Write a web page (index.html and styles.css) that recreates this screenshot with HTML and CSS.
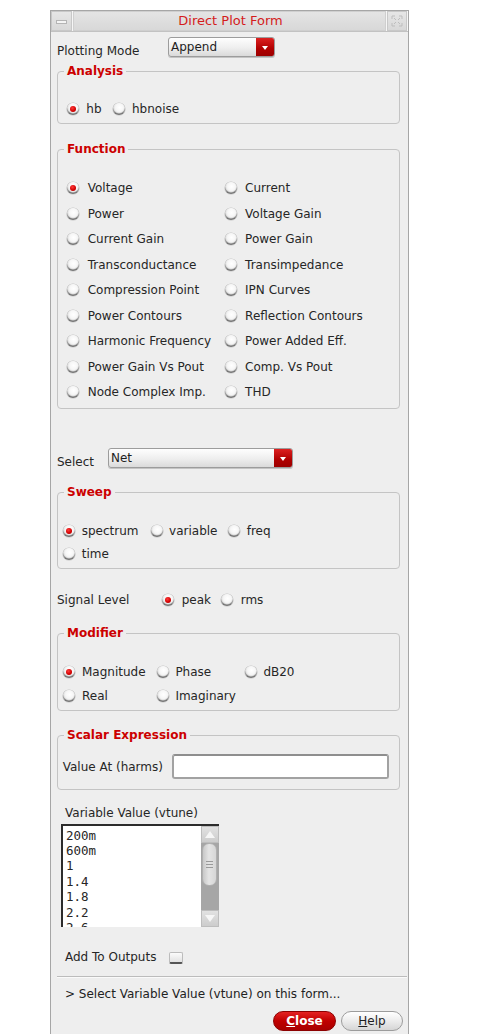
FILE: index.html
```html
<!DOCTYPE html>
<html lang="en">
<head>
<meta charset="utf-8">
<title>Direct Plot Form</title>
<link rel="stylesheet" href="styles.css">
</head>
<body>
<div class="window">
  <div class="titlebar">
    <div class="tb-btn tb-min"><span class="dash"></span></div>
    <div class="tb-title">Direct Plot Form</div>
    <div class="tb-btn tb-max">
      <svg width="12" height="12" viewBox="0 0 12 12" fill="none" stroke="#bdbdbd" stroke-width="1">
        <path d="M1 4V1h3M8 1h3v3M11 8v3H8M4 11H1V8"/>
        <path d="M3 3l2 2M9 3L7 5M9 9L7 7M3 9l2-2"/>
      </svg>
    </div>
  </div>

  <div class="content">
    <div class="field-row mode-row">
      <span class="lbl lbl-mode">Plotting Mode</span>
      <div class="combo combo-mode"><span class="val">Append</span><span class="arrow"></span></div>
    </div>

    <fieldset class="group g-analysis">
      <legend>Analysis</legend>
      <div class="opts opts-analysis">
        <div class="opt"><span class="rb on"></span>hb</div>
        <div class="opt"><span class="rb"></span>hbnoise</div>
      </div>
    </fieldset>

    <fieldset class="group g-function">
      <legend>Function</legend>
      <div class="opts opts-function">
        <div class="opt"><span class="rb on"></span>Voltage</div>
        <div class="opt"><span class="rb"></span>Current</div>
        <div class="opt"><span class="rb"></span>Power</div>
        <div class="opt"><span class="rb"></span>Voltage Gain</div>
        <div class="opt"><span class="rb"></span>Current Gain</div>
        <div class="opt"><span class="rb"></span>Power Gain</div>
        <div class="opt"><span class="rb"></span>Transconductance</div>
        <div class="opt"><span class="rb"></span>Transimpedance</div>
        <div class="opt"><span class="rb"></span>Compression Point</div>
        <div class="opt"><span class="rb"></span>IPN Curves</div>
        <div class="opt"><span class="rb"></span>Power Contours</div>
        <div class="opt"><span class="rb"></span>Reflection Contours</div>
        <div class="opt"><span class="rb"></span>Harmonic Frequency</div>
        <div class="opt"><span class="rb"></span>Power Added Eff.</div>
        <div class="opt"><span class="rb"></span>Power Gain Vs Pout</div>
        <div class="opt"><span class="rb"></span>Comp. Vs Pout</div>
        <div class="opt"><span class="rb"></span>Node Complex Imp.</div>
        <div class="opt"><span class="rb"></span>THD</div>
      </div>
    </fieldset>

    <div class="field-row select-row">
      <span class="lbl lbl-select">Select</span>
      <div class="combo combo-select"><span class="val">Net</span><span class="arrow"></span></div>
    </div>

    <fieldset class="group g-sweep">
      <legend>Sweep</legend>
      <div class="opts opts-sweep">
        <div class="opt"><span class="rb on"></span>spectrum</div>
        <div class="opt"><span class="rb"></span>variable</div>
        <div class="opt"><span class="rb"></span>freq</div>
        <div class="opt"><span class="rb"></span>time</div>
      </div>
    </fieldset>

    <div class="signal-row">
      <span class="lbl lbl-signal">Signal Level</span>
      <div class="opt opt-peak"><span class="rb on"></span>peak</div>
      <div class="opt"><span class="rb"></span>rms</div>
    </div>

    <fieldset class="group g-modifier">
      <legend>Modifier</legend>
      <div class="opts opts-modifier">
        <div class="opt"><span class="rb on"></span>Magnitude</div>
        <div class="opt"><span class="rb"></span>Phase</div>
        <div class="opt"><span class="rb"></span>dB20</div>
        <div class="opt"><span class="rb"></span>Real</div>
        <div class="opt"><span class="rb"></span>Imaginary</div>
      </div>
    </fieldset>

    <fieldset class="group g-scalar">
      <legend>Scalar Expression</legend>
      <div class="scalar-row">
        <span class="lbl lbl-value">Value At (harms)</span>
        <div class="text-input"></div>
      </div>
    </fieldset>

    <div class="lbl lbl-var">Variable Value (vtune)</div>
    <div class="listbox">
      <div class="list">
        <div>200m</div>
        <div>600m</div>
        <div>1</div>
        <div>1.4</div>
        <div>1.8</div>
        <div>2.2</div>
        <div>2.6</div>
      </div>
      <div class="sb">
        <div class="sb-btn sb-up"><span class="tri-up"></span></div>
        <div class="sb-track">
          <div class="sb-thumb"><span class="grip"></span></div>
        </div>
        <div class="sb-btn sb-down"><span class="tri-down"></span></div>
      </div>
    </div>

    <div class="add-row">
      <span class="lbl lbl-add">Add To Outputs</span>
      <span class="checkbox"></span>
    </div>

    <div class="separator"></div>

    <div class="status">&gt; Select Variable Value (vtune) on this form...</div>

    <div class="buttons">
      <div class="btn btn-close"><span class="u">C</span>lose</div>
      <div class="btn btn-help"><span class="u">H</span>elp</div>
    </div>
  </div>
</div>
</body>
</html>
```

FILE: styles.css
```css
* { box-sizing: border-box; }

html, body {
  margin: 0;
  padding: 0;
  background: #ffffff;
  height: 1034px;
  overflow: hidden;
}

body {
  font-family: "DejaVu Sans", "Noto Sans", sans-serif;
  font-size: 12px;
  line-height: 14px;
  color: #262626;
}

.window {
  margin: 10px 0 0 50px;
  width: 359px;
  height: 1040px;
  border: 1px solid #a6a6a6;
  border-bottom: none;
  background: #eeeeee;
  display: flex;
  flex-direction: column;
}

/* ---------- title bar ---------- */
.titlebar {
  display: flex;
  height: 21px;
  gap: 1px;
  background: #f6f6f6;
  border-bottom: 1px solid #c2c2c2;
  padding-right: 1px;
}

.tb-btn {
  width: 21px;
  flex: none;
  border: 1px solid #c8c8c8;
  background: linear-gradient(#e6e6e6, #d8d8d8);
  display: flex;
  align-items: center;
  justify-content: center;
}

.tb-max { width: 20px; }

.dash {
  width: 11px;
  height: 4px;
  border: 1px solid #b4b4b4;
  background: #f4f4f4;
  margin-top: 1px;
}

.tb-title {
  flex: 1;
  border: 1px solid #cfcfcf;
  background: linear-gradient(#e4e4e4, #d8d8d8);
  color: #d41c1c;
  font-size: 13px;
  line-height: 18px;
  text-align: center;
  padding-left: 2px;
}

/* ---------- content ---------- */
.content {
  display: flex;
  flex-direction: column;
  align-items: flex-start;
  padding: 0 1px 0 6px;
}

.lbl { flex: none; }

.field-row {
  display: flex;
  align-items: flex-start;
}

.mode-row { margin-top: 5px; }
.lbl-mode { width: 111px; margin-top: 7px; }

.select-row { margin-top: 39px; }
.lbl-select { width: 51px; margin-top: 7px; }

.combo {
  display: flex;
  height: 20px;
  border: 1px solid #9c9c9c;
  border-radius: 3px;
  background: linear-gradient(#fefefe, #eeeeee 55%, #dadada);
  box-shadow: 0 1px 0 #c4c4c4;
  overflow: hidden;
}

.combo-mode { width: 107px; }
.combo-select { width: 185px; }

.combo .val {
  flex: 1;
  padding: 2px 0 0 2px;
  color: #1e1e1e;
}

.combo .arrow {
  width: 18px;
  flex: none;
  background: linear-gradient(#dc2020, #b00000 60%, #9c0000);
  display: flex;
  align-items: center;
  justify-content: center;
}

.combo .arrow::after {
  content: "";
  width: 0;
  height: 0;
  border-left: 3px solid transparent;
  border-right: 3px solid transparent;
  border-top: 4px solid #ffffff;
  margin-top: 1px;
}

/* ---------- group boxes ---------- */
.group {
  width: 343px;
  min-width: 0;
  margin: 18px 0 0 0;
  padding: 0;
  border: 1px solid #c4c4c4;
  border-radius: 4px;
}

.group legend {
  margin-left: 6px;
  padding: 0 3px;
  line-height: 15px;
  font-weight: bold;
  color: #cc0000;
}

.g-analysis { margin-top: 6px; }
.g-sweep { margin-top: 16px; }
.g-modifier { margin-top: 19px; }

.opts { display: grid; align-items: center; }

.opt {
  display: flex;
  align-items: center;
  gap: 7px;
  white-space: nowrap;
}

.opts-analysis {
  grid-template-columns: 45.7px auto;
  grid-auto-rows: 26px;
  padding: 17px 0 1px 9.3px;
}

.opts-function {
  grid-template-columns: 157.4px auto;
  grid-auto-rows: 25.5px;
  padding: 18.25px 0 3.25px 9.3px;
}
.opts-function .opt { gap: 8.4px; }

.opts-sweep {
  grid-template-columns: 87.4px 77.6px auto;
  grid-auto-rows: 23px;
  padding: 19.5px 0 2.5px 5.3px;
}
.opts-sweep .opt { gap: 6.4px; }

.opts-modifier {
  grid-template-columns: 93.4px 88px auto;
  grid-auto-rows: 23.5px;
  padding: 19.25px 0 2.75px 5.3px;
}
.opts-modifier .opt { gap: 6.7px; }

/* radio */
.rb {
  width: 12px;
  height: 12px;
  flex: none;
  border-radius: 50%;
  background: radial-gradient(circle at 55% 38%, #ffffff 0%, #f6f6f6 40%, #d8d8d8 78%, #c2c2c2 100%);
  box-shadow: inset 0 -1.5px 1px rgba(0, 0, 0, 0.5), 0 0 0 0.6px rgba(0, 0, 0, 0.18);
  display: flex;
  align-items: center;
  justify-content: center;
}

.rb.on::after {
  content: "";
  width: 6px;
  height: 6px;
  border-radius: 50%;
  background: radial-gradient(circle at 40% 35%, #ff3a3a, #d00000 60%, #a00000);
}

/* signal level */
.signal-row {
  display: flex;
  align-items: center;
  height: 14px;
  margin-top: 24px;
}
.lbl-signal { width: 105.3px; }
.signal-row .opt { gap: 7.4px; }
.opt-peak { margin-right: 10.3px; }

/* scalar */
.g-scalar { margin-top: 17px; }
.scalar-row {
  display: flex;
  align-items: center;
  padding: 11px 0 10px 4.7px;
}
.lbl-value { width: 109.6px; }
.text-input {
  width: 217px;
  height: 25px;
  border: 2px solid #a2a2a2;
  border-top-color: #8e8e8e;
  border-radius: 3px;
  background: #ffffff;
}

/* variable list */
.lbl-var { margin: 16px 0 0 8px; }

.listbox {
  margin: 4px 0 0 3.7px;
  width: 158px;
  height: 103px;
  display: flex;
  background: #ffffff;
  border-top: 2px solid #2c2c2c;
  border-left: 2px solid #2c2c2c;
}

.list {
  flex: 1;
  overflow: hidden;
  padding: 1.5px 0 0 3.3px;
  font-family: "DejaVu Sans Mono", "Liberation Mono", monospace;
  font-size: 12.5px;
  line-height: 15.4px;
  color: #262626;
}

.sb {
  width: 18px;
  flex: none;
  display: flex;
  flex-direction: column;
  background: #a6a6a6;
}

.sb-btn {
  height: 17px;
  flex: none;
  background: linear-gradient(#e2e2e2, #cccccc);
  border: 1px solid #bdbdbd;
  display: flex;
  align-items: center;
  justify-content: center;
}

.tri-up, .tri-down {
  width: 0;
  height: 0;
  border-left: 5px solid transparent;
  border-right: 5px solid transparent;
}
.tri-up { border-bottom: 7px solid #f6f6f6; }
.tri-down { border-top: 7px solid #f6f6f6; }

.sb-track {
  flex: 1;
  padding: 0 1.5px;
}

.sb-thumb {
  height: 43px;
  border-radius: 7px;
  background: linear-gradient(90deg, #c8c8c8, #e4e4e4 45%, #d6d6d6);
  border: 1px solid #b0b0b0;
  display: flex;
  align-items: center;
  justify-content: center;
}

.grip {
  width: 7px;
  height: 7px;
  background: repeating-linear-gradient(#9a9a9a 0 1px, transparent 1px 3px);
}

/* add to outputs */
.add-row {
  display: flex;
  align-items: center;
  height: 14px;
  margin: 23px 0 0 8px;
}
.lbl-add { width: 104.3px; }
.checkbox {
  width: 14px;
  height: 12px;
  margin-top: 1px;
  border: 1px solid #bcbcbc;
  border-bottom: 2px solid #555555;
  border-radius: 2px;
  background: linear-gradient(#fbfbfb, #e2e2e2);
}

.separator {
  align-self: stretch;
  margin-top: 12px;
  height: 2px;
  border-top: 1px solid #bcbcbc;
  border-bottom: 1px solid #fafafa;
}

.status {
  margin: 9px 0 0 8px;
  color: #222222;
}

/* buttons */
.buttons {
  align-self: stretch;
  display: flex;
  justify-content: flex-end;
  gap: 5px;
  margin: 10px 4px 0 0;
}

.btn {
  height: 20px;
  border-radius: 10px;
  display: flex;
  align-items: center;
  justify-content: center;
}

.btn .u { text-decoration: underline; }

.btn-close {
  width: 63px;
  background: linear-gradient(#e42222, #c00000 50%, #a80000);
  border: 1px solid #8c0000;
  color: #ffffff;
  font-weight: bold;
}

.btn-help {
  width: 62px;
  background: linear-gradient(#ffffff, #ececec 50%, #d6d6d6);
  border: 1px solid #9c9c9c;
  color: #1e1e1e;
}
```
